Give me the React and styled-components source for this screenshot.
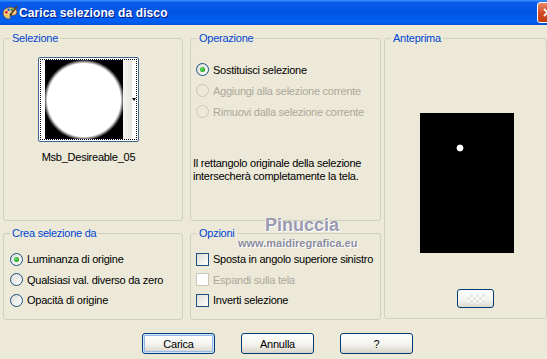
import React from 'react'
import styled, { createGlobalStyle } from 'styled-components'

const GlobalStyle = createGlobalStyle`
  html, body {
    margin: 0;
    padding: 0;
    background: #ece9d8;
  }
  body {
    font-family: "Liberation Sans", Arial, sans-serif;
    font-size: 11px;
    letter-spacing: -0.25px;
    color: #000;
  }
`

const Window = styled.div`
  position: relative;
  width: 547px;
  height: 359px;
  overflow: hidden;
  background: #ece9d8;
  display: flex;
  flex-direction: column;
`

const TitleBar = styled.div`
  flex: none;
  height: 25px;
  display: flex;
  align-items: center;
  padding-left: 2px;
  background: linear-gradient(
    to bottom,
    #3d95ff 0%,
    #0a5dec 10%,
    #0054e3 50%,
    #0160f4 86%,
    #0050d8 100%
  );
`

const TitleText = styled.span`
  margin-left: 1px;
  font-size: 12px;
  font-weight: bold;
  letter-spacing: 0.1px;
  color: #fff;
  text-shadow: 1px 1px 0 #0a1883;
`

const CloseButton = styled.div`
  margin-left: auto;
  margin-right: -11px;
  width: 21px;
  height: 21px;
  box-sizing: border-box;
  border: 1px solid #fff;
  border-radius: 3px;
  background: linear-gradient(to bottom, #e98a68, #d24a22 55%, #c13a10);
  display: flex;
  align-items: center;
  justify-content: center;
`

const Body = styled.div`
  padding: 7px 0 0 3px;
  display: flex;
  flex-direction: column;
`

const Panels = styled.div`
  display: flex;
  align-items: flex-start;
`

const LeftGrid = styled.div`
  display: grid;
  grid-template-columns: 180px 191px;
  grid-template-rows: 189px 93px;
  column-gap: 7px;
  row-gap: 6px;
`

const Group = styled.fieldset`
  margin: 0;
  padding: 0;
  min-width: 0;
  box-sizing: border-box;
  height: 100%;
  border: 1px solid #d0d0bf;
  border-radius: 3px;
`

const PreviewGroup = styled(Group)`
  margin-left: 3px;
  width: 170px;
  height: 287px;
`

const Legend = styled.legend`
  margin-left: 6px;
  padding: 0 2px;
  font-size: 11px;
  line-height: 13px;
  color: #0046d5;
`

const SelBody = styled.div`
  display: flex;
  flex-direction: column;
  align-items: center;
  padding-right: 9px;
`

const Thumb = styled.div`
  margin-top: 12px;
  width: 101px;
  height: 85px;
  box-sizing: border-box;
  border: 1px solid #3d6590;
  border-radius: 2px;
  background: #fff;
  padding: 1px;
`

const ThumbFocus = styled.div`
  height: 100%;
  box-sizing: border-box;
  border: 1px dotted #000;
  display: flex;
`

const ThumbImage = styled.div`
  margin-left: 4px;
  width: 78px;
  height: 79px;
  background: radial-gradient(circle at 39px 40px, #fff 36.5px, #000 40.5px);
`

const ThumbStrip = styled.div`
  width: 9px;
  background: linear-gradient(to right, #f6f6f2, #e6e6de);
`

const ThumbArrow = styled.div`
  flex: 1;
  display: flex;
  align-items: center;
  justify-content: center;

  &::after {
    content: '';
    border-left: 2.5px solid transparent;
    border-right: 2.5px solid transparent;
    border-top: 3px solid #000;
  }
`

const ThumbName = styled.div`
  margin-top: 9px;
  line-height: 13px;
`

const OptList = styled.div`
  padding: ${(p) => p.$top}px 0 0 ${(p) => p.$indent}px;
  display: flex;
  flex-direction: column;
`

const Option = styled.div`
  height: ${(p) => p.$h}px;
  display: flex;
  align-items: center;
  gap: 4px;
  color: ${(p) => (p.$disabled ? '#aca899' : '#000')};
`

const Radio = styled.span`
  position: relative;
  width: 13px;
  height: 13px;
  box-sizing: border-box;
  border-radius: 50%;
  border: 1px solid ${(p) => (p.$disabled ? '#cac8bb' : '#1c5180')};
  background: ${(p) =>
    p.$disabled ? '#ece9d8' : 'linear-gradient(135deg, #dcdcd7, #ffffff)'};

  &::after {
    content: '';
    display: ${(p) => (p.$checked ? 'block' : 'none')};
    position: absolute;
    left: 3px;
    top: 3px;
    width: 5px;
    height: 5px;
    border-radius: 50%;
    background: radial-gradient(circle at 40% 40%, #6be06b, #21a121 70%);
  }
`

const Check = styled.span`
  width: 13px;
  height: 13px;
  box-sizing: border-box;
  border: 1px solid ${(p) => (p.$disabled ? '#cac8bb' : '#1c5180')};
  background: ${(p) =>
    p.$disabled ? '#ffffff' : 'linear-gradient(135deg, #dcdcd7, #ffffff)'};
`

const Note = styled.div`
  margin-top: 35px;
  padding-left: 2px;
  line-height: 13px;
`

const Preview = styled.div`
  margin: 68px 0 0 35px;
  width: 94px;
  height: 140px;
  background: radial-gradient(circle at 40px 35px, #fff 3px, #000 3.8px);
`

const SmallButton = styled.div`
  margin: 36px 0 0 72px;
  width: 37px;
  height: 19px;
  box-sizing: border-box;
  border: 1px solid #003c74;
  border-radius: 3px;
  background: linear-gradient(to bottom, #ffffff, #f2f2ec 60%, #dcd8cc);
  display: flex;
  align-items: center;
  justify-content: center;
`

const Checker = styled.span`
  width: 18px;
  height: 10px;
  opacity: 0.5;
  background: repeating-conic-gradient(#d8d8d8 0 25%, #ffffff 0 50%) 0 0 / 6px 6px;
`

const ButtonRow = styled.div`
  margin: 13px 0 0 139px;
  display: flex;
  gap: 26px;
`

const Button = styled.div`
  width: 73px;
  height: 21px;
  box-sizing: border-box;
  border: 1px solid #003c74;
  border-radius: 3px;
  background: linear-gradient(to bottom, #ffffff, #f3f3ee 55%, #d8d3c8);
  box-shadow: ${(p) =>
    p.$default ? 'inset 0 0 0 1px #cee7ff, inset 0 0 0 2px #98b8ea' : 'none'};
  display: flex;
  align-items: center;
  justify-content: center;
`

const Watermark = styled.div`
  position: absolute;
  left: ${(p) => p.$x}px;
  top: ${(p) => p.$y}px;
  font-weight: bold;
  font-size: ${(p) => p.$size}px;
  line-height: ${(p) => p.$size}px;
  letter-spacing: 0;
  color: ${(p) => p.$color};
  text-shadow: 1px 1px 0 #ffffff, -1px 0 0 #f4f4f8;
  white-space: nowrap;
`

const AppIcon = () => (
  <svg width="16" height="16" viewBox="0 0 16 16">
    <path
      d="M8 2.5C4.2 2.5 1.2 4.8 1.2 8.2c0 3 2.4 5.6 5.8 5.6 1.4 0 1.5-1.1 1-1.9-.5-.8 0-1.6 1-1.6h2.1c2.4 0 3.8-1.4 3.8-3.3C14.9 4.5 12 2.5 8 2.5z"
      fill="#eccb8c"
      stroke="#8a5a20"
      strokeWidth="0.8"
    />
    <circle cx="4.4" cy="7.2" r="1.3" fill="#e02020" />
    <circle cx="6.6" cy="4.8" r="1.2" fill="#2060e0" />
    <circle cx="9.8" cy="4.8" r="1.2" fill="#20a040" />
    <circle cx="4.6" cy="10.6" r="1.1" fill="#f0c820" />
    <path d="M15 1.2 9.4 8.6" stroke="#6a3a10" strokeWidth="1.6" />
    <path d="M9.4 8.6 8.2 10.4" stroke="#303030" strokeWidth="1.8" />
  </svg>
)

const radiosOp = [
  { label: 'Sostituisci selezione', checked: true },
  { label: 'Aggiungi alla selezione corrente', disabled: true },
  { label: 'Rimuovi dalla selezione corrente', disabled: true },
]

const radiosSrc = [
  { label: 'Luminanza di origine', checked: true },
  { label: 'Qualsiasi val. diverso da zero' },
  { label: 'Opacità di origine' },
]

const checks = [
  { label: 'Sposta in angolo superiore sinistro' },
  { label: 'Espandi sulla tela', disabled: true },
  { label: 'Inverti selezione' },
]

export default function App() {
  return (
    <Window>
      <GlobalStyle />
      <TitleBar>
        <AppIcon />
        <TitleText>Carica selezione da disco</TitleText>
        <CloseButton>
          <svg width="9" height="9" viewBox="0 0 9 9">
            <path d="M1 1l7 7M8 1L1 8" stroke="#fff" strokeWidth="1.8" />
          </svg>
        </CloseButton>
      </TitleBar>

      <Body>
        <Panels>
          <LeftGrid>
            <Group>
              <Legend>Selezione</Legend>
              <SelBody>
                <Thumb>
                  <ThumbFocus>
                    <ThumbImage />
                    <ThumbStrip />
                    <ThumbArrow />
                  </ThumbFocus>
                </Thumb>
                <ThumbName>Msb_Desireable_05</ThumbName>
              </SelBody>
            </Group>

            <Group>
              <Legend>Operazione</Legend>
              <OptList $top={14} $indent={5}>
                {radiosOp.map((r) => (
                  <Option key={r.label} $h={21} $disabled={r.disabled}>
                    <Radio $checked={r.checked} $disabled={r.disabled} />
                    {r.label}
                  </Option>
                ))}
              </OptList>
              <Note>
                Il rettangolo originale della selezione
                <br />
                intersecherà completamente la tela.
              </Note>
            </Group>

            <Group>
              <Legend>Crea selezione da</Legend>
              <OptList $top={9} $indent={6}>
                {radiosSrc.map((r) => (
                  <Option key={r.label} $h={20.5}>
                    <Radio $checked={r.checked} />
                    {r.label}
                  </Option>
                ))}
              </OptList>
            </Group>

            <Group>
              <Legend>Opzioni</Legend>
              <OptList $top={9} $indent={5}>
                {checks.map((c) => (
                  <Option key={c.label} $h={20.5} $disabled={c.disabled}>
                    <Check $disabled={c.disabled} />
                    {c.label}
                  </Option>
                ))}
              </OptList>
            </Group>
          </LeftGrid>

          <PreviewGroup>
            <Legend>Anteprima</Legend>
            <Preview />
            <SmallButton>
              <Checker />
            </SmallButton>
          </PreviewGroup>
        </Panels>

        <ButtonRow>
          <Button $default>Carica</Button>
          <Button>Annulla</Button>
          <Button>?</Button>
        </ButtonRow>
      </Body>

      <Watermark $x={265} $y={216} $size={18} $color="#9a9aae">
        Pinuccia
      </Watermark>
      <Watermark $x={238} $y={238} $size={11} $color="#8c8c9c">
        www.maidiregrafica.eu
      </Watermark>
    </Window>
  )
}
